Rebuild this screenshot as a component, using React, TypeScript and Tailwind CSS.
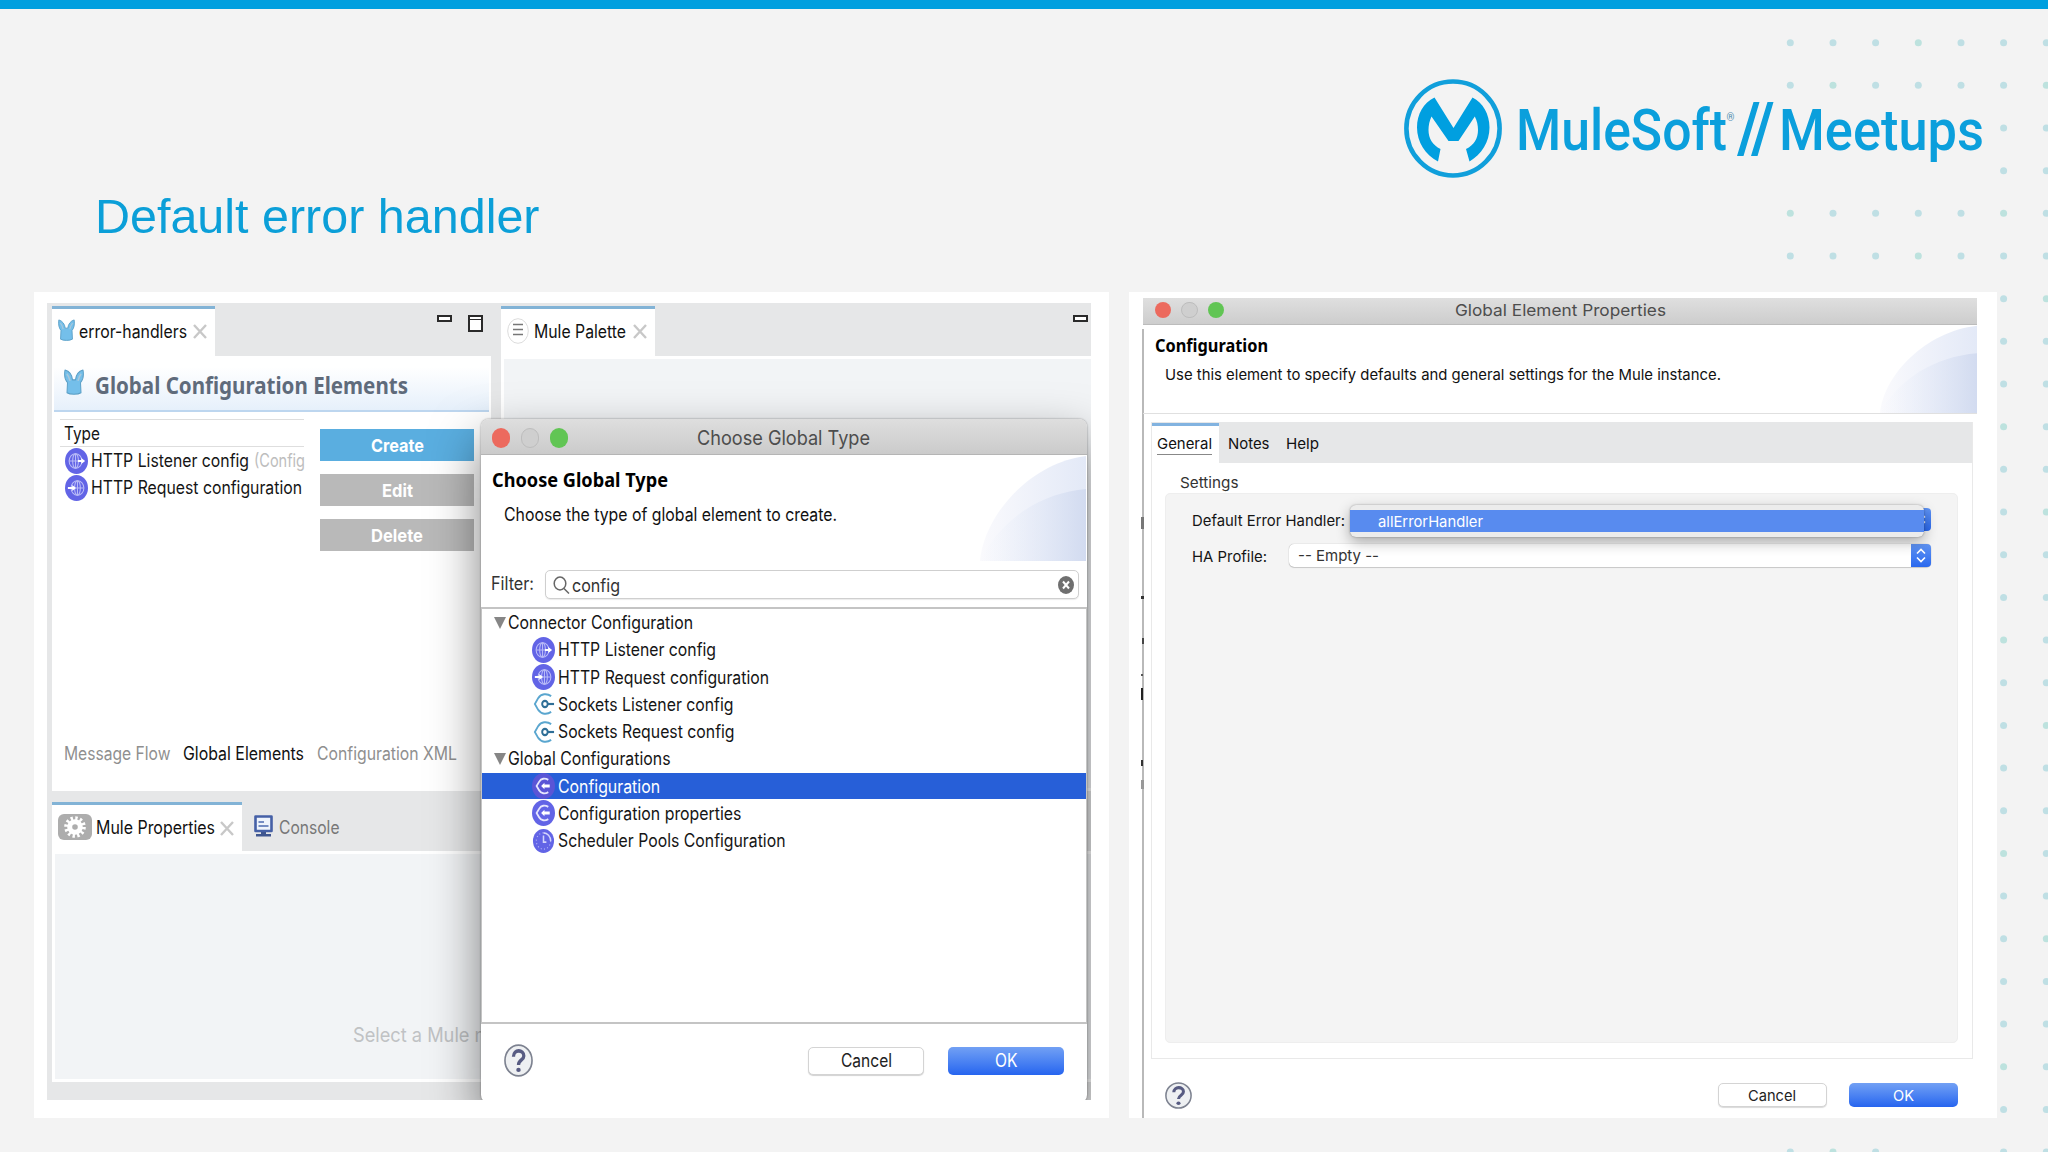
import React, { useLayoutEffect, useRef, useState } from "react";

/* Text set to an exact advance width, condensed or widened horizontally. */
function Fit({ w, className = "", children }: { w: number; className?: string; children: React.ReactNode }) {
  const ref = useRef<HTMLSpanElement>(null);
  const [scale, setScale] = useState(1);
  useLayoutEffect(() => {
    if (ref.current) setScale(w / (ref.current.getBoundingClientRect().width / scale));
  }, [w]);
  return (
    <span className={"block shrink-0 whitespace-nowrap " + className} style={{ width: w }}>
      <span ref={ref} className="inline-block origin-left" style={{ transform: `scaleX(${scale})` }}>
        {children}
      </span>
    </span>
  );
}

const COLS = [1790.3, 1833, 1875.6, 1918.3, 1961, 2003.6, 2046.3];

function Dots() {
  const dots: [number, number][] = [];
  for (let r = 1; r <= 27; r++) {
    COLS.forEach((x, c) => {
      const wide = r === 1 || r === 2 || r === 5 || r === 6 || (r === 27 && c < 3);
      if (wide || c >= 5) dots.push([x, r * 42.67]);
    });
  }
  return (
    <svg className="absolute inset-0" width="2048" height="1152">
      {dots.map(([x, y], i) => (
        <circle key={i} cx={x} cy={y} r="3.5" fill={i % 5 === 3 ? "#bde2de" : "#bfdfe4"} />
      ))}
    </svg>
  );
}

function MuleLogo() {
  return (
    <svg className="h-[99px] w-[98px] shrink-0" viewBox="0 0 98 99">
      <ellipse cx="49" cy="49.5" rx="46.6" ry="47" fill="none" stroke="#109fdb" strokeWidth="4.6" />
      <path
        fill="#009fe0"
        d="M30.5 18.5 L49.5 49 L68.5 18.5 C79 24 85.500 35 85.500 48.500 C85.500 63 77.500 75.500 65.500 82.500 L62 70 C70 66 74 59.500 74 51 C74 46 73 42 70.800 37.500 L54.500 62 L44.500 62 L27.500 37.500 C25.500 42 24.500 46 24.500 51 C24.500 59.500 28.500 66 36.500 70 L34 82.500 C21.500 76 13 63 13 48.500 C13 35 19.500 24 30.500 18.500 Z"
      />
    </svg>
  );
}

function Mule({ className }: { className: string }) {
  return (
    <svg className={className} viewBox="0 0 20 24" preserveAspectRatio="none">
      <path
        fill="#74bfea"
        stroke="#5a9fc6"
        strokeWidth="1"
        strokeLinejoin="round"
        d="M1 1 C5 2 8 5.500 8.500 10 L11.500 10 C12 5.500 15 2 19 1 C20 6 18.500 10.500 16.500 12.500 L17 22 C14 23.800 6 23.800 3 22 L3.500 12.500 C1.500 10.500 0 6 1 1 Z"
      />
      <path d="M2.800 4.500 C4.800 6.500 5.500 8.500 6 11 M17.200 4.500 C15.200 6.500 14.500 8.500 14 11" fill="none" stroke="#a9c9dc" strokeWidth="1.500" />
    </svg>
  );
}

type IconKind = "listener" | "request" | "socket" | "config" | "clock";

function TypeIcon({ kind, dim = false }: { kind: IconKind; dim?: boolean }) {
  if (kind === "socket")
    return (
      <svg className="h-[26px] w-[23px] shrink-0" viewBox="0 0 24 24" preserveAspectRatio="none" fill="none">
        <path d="M20 4.800 C15.500 1.800 9.500 2.600 6.500 6.500 L3 12 L6.500 17.500 C9.500 21.400 15.500 22.200 20 19.200" stroke="#5aa6cf" strokeWidth="1.900" />
        <circle cx="13.500" cy="12" r="2.900" stroke="#2f6f97" strokeWidth="2" />
        <path d="M16.500 12 H23" stroke="#2f6f97" strokeWidth="2" />
      </svg>
    );
  return (
    <svg className="h-[26px] w-[23px] shrink-0" viewBox="0 0 24 24" preserveAspectRatio="none" fill="none">
      <circle cx="12" cy="12" r={kind === "clock" ? 11 : 12} fill={dim ? "#5a55d6" : "#6264e6"} />
      {(kind === "listener" || kind === "request") && (
        <g stroke="#b9bbf7" strokeWidth="1.100" transform={kind === "request" ? "translate(1.500 0)" : "translate(-0.500 0)"}>
          <circle cx="11.500" cy="12" r="6.700" />
          <ellipse cx="11.500" cy="12" rx="3" ry="6.700" />
          <path d="M4.800 12 H18 M11.500 5.300 V18.700" />
        </g>
      )}
      {kind === "listener" && <path d="M13.500 11 H17 V9.200 L21 12 L17 14.800 V13 H13.500 Z" fill="#fff" />}
      {kind === "request" && <path d="M3 11 H7.500 V9.200 L11.500 12 L7.500 14.800 V13 H3 Z" fill="#fff" />}
      {kind === "config" && (
        <g>
          <path d="M17 6.400 C13.500 4.300 9.500 5 7.500 8 L4.800 12 L7.500 16 C9.500 19 13.500 19.700 17 17.600" stroke="#e6e6fd" strokeWidth="1.800" />
          <path d="M9.500 12 L13 9 V10.600 H18.500 V13.400 H13 V15 Z" fill="#fff" />
        </g>
      )}
      {kind === "clock" && (
        <g stroke="#d4d5fb">
          <path d="M12 4.500 A7.500 7.500 0 0 1 19.500 12" strokeWidth="1.600" />
          <path d="M19.500 12 A7.500 7.500 0 1 1 12 4.500" strokeWidth="1.200" strokeDasharray="1 2.400" opacity="0.700" />
          <path d="M12 7 V13 H15" strokeWidth="1.600" />
        </g>
      )}
    </svg>
  );
}

function Close() {
  return (
    <svg className="h-[15px] w-[14px] shrink-0" viewBox="0 0 14 15" preserveAspectRatio="none">
      <path d="M1 1 L13 14 M13 1 L1 14" stroke="#c8c8c8" strokeWidth="2.400" />
    </svg>
  );
}

function Minimize() {
  return <span className="block h-[7px] w-[15px] shrink-0 border-2 border-[#2a2a2a] bg-white" />;
}

function Lights({ className }: { className: string }) {
  return (
    <>
      <span className={"rounded-full bg-[#ec6a5e] " + className} />
      <span className={"rounded-full border border-[#bdbdbd] bg-[#cfcfcf] " + className} />
      <span className={"rounded-full bg-[#61c554] " + className} />
    </>
  );
}

function Swoosh({ id, className }: { id: string; className: string }) {
  return (
    <svg className={className} viewBox="0 0 106 106" preserveAspectRatio="none">
      <defs>
        <linearGradient id={id + "a"} x1="0" x2="1">
          <stop offset="0" stopColor="#fafafd" />
          <stop offset="1" stopColor="#e3e9f7" />
        </linearGradient>
        <linearGradient id={id + "b"} x1="0" x2="1">
          <stop offset="0" stopColor="#eef2fb" stopOpacity="0" />
          <stop offset="1" stopColor="#d2dbf0" />
        </linearGradient>
      </defs>
      <path d="M0 106 C4 60 50 8 106 1 V106 Z" fill={`url(#${id}a)`} />
      <path d="M0 106 C20 65 60 38 106 34 V106 Z" fill={`url(#${id}b)`} />
    </svg>
  );
}

function HelpIcon({ className }: { className: string }) {
  return (
    <svg className={className} viewBox="0 0 30 30" preserveAspectRatio="none">
      <circle cx="15" cy="15" r="14" fill="#eef0f2" stroke="#7d8290" strokeWidth="1.700" />
      <path d="M9.800 11.500 C9.800 4.500 20.500 4.800 20.500 10.800 C20.500 14.800 15 14.500 15 19" fill="none" stroke="#575b82" strokeWidth="3.400" />
      <ellipse cx="15" cy="23.600" rx="2.300" ry="1.900" fill="#575b82" />
    </svg>
  );
}

const TREE: { label: string; w: number; icon?: IconKind; selected?: boolean }[] = [
  { label: "Connector Configuration", w: 185 },
  { label: "HTTP Listener config", w: 158, icon: "listener" },
  { label: "HTTP Request configuration", w: 211, icon: "request" },
  { label: "Sockets Listener config", w: 175.5, icon: "socket" },
  { label: "Sockets Request config", w: 176.5, icon: "socket" },
  { label: "Global Configurations", w: 162.5 },
  { label: "Configuration", w: 102, icon: "config", selected: true },
  { label: "Configuration properties", w: 183.5, icon: "config" },
  { label: "Scheduler Pools Configuration", w: 227.5, icon: "clock" },
];

function ChooseDialog() {
  return (
    <div className="absolute left-[434px] top-[116px] flex h-[684px] w-[606px] flex-col rounded-[8px] bg-white shadow-[0_22px_50px_rgba(0,0,0,0.5),0_0_2px_rgba(0,0,0,0.45)]">
      <div className="relative flex h-[36px] shrink-0 items-center gap-[11px] rounded-t-[8px] border-b border-[#b5b5b5] bg-gradient-to-b from-[#dedede] to-[#cbcbcb] pl-[11px] pt-[2px]">
        <Lights className="h-[20px] w-[18px]" />
        <Fit w={173} className="ml-[118px] text-[20px] leading-[34px] text-[#4d4d4d]">Choose Global Type</Fit>
      </div>
      <div className="flex h-[106px] shrink-0 justify-between">
        <div className="pl-[11px] pt-[13px]">
          <Fit w={176} className="font-['Noto_Sans'] text-[19.5px] font-bold leading-[24px] text-black">Choose Global Type</Fit>
          <Fit w={333} className="ml-[12px] mt-[11px] text-[18px] leading-[24px] text-[#111]">Choose the type of global element to create.</Fit>
        </div>
        <Swoosh id="left" className="mr-px h-[106px] w-[106px]" />
      </div>
      <div className="flex h-[46px] shrink-0 items-center pl-[10px]">
        <Fit w={43} className="text-[18px] leading-[28px] text-[#333]">Filter:</Fit>
        <div className="ml-[11px] mt-px flex h-[29px] w-[534px] items-center rounded-[5px] border border-[#cfcfcf] bg-white pl-[7px] pr-[4px] shadow-[0_1px_1px_rgba(0,0,0,0.08)]">
          <svg className="h-[18px] w-[17px]" viewBox="0 0 17 18" fill="none" stroke="#666" strokeWidth="1.500">
            <ellipse cx="7" cy="7.500" rx="5.800" ry="6.500" />
            <path d="M11 12.500 L16 17.500" />
          </svg>
          <Fit w={48} className="ml-[2px] mt-[2px] text-[18px] leading-[26px] text-[#333]">config</Fit>
          <svg className="ml-auto h-[18px] w-[16px]" viewBox="0 0 16 18">
            <ellipse cx="8" cy="9" rx="8" ry="9" fill="#6f6f6f" />
            <path d="M5 5.500 L11 12.500 M11 5.500 L5 12.500" stroke="#fff" strokeWidth="2" />
          </svg>
        </div>
      </div>
      <div className="h-[417px] shrink-0 border border-t-2 border-b-2 border-[#c4c4c4]">
        {TREE.map((row) => (
          <div key={row.label} className="flex h-[27.25px] items-center">
            <div className={"flex h-[25.5px] w-full items-center text-[18px] leading-[25px] " + (row.selected ? "bg-[#275fd8] text-white" : "text-[#151515]")}>
              {row.icon ? (
                <span className="flex items-center pl-[50px]">
                  <TypeIcon kind={row.icon} dim={row.selected} />
                  <Fit w={row.w} className="ml-[3px]">{row.label}</Fit>
                </span>
              ) : (
                <span className="flex items-center pl-[12px]">
                  <svg className="h-[12px] w-[12px]" viewBox="0 0 12 12"><path d="M0 0 H12 L6 12 Z" fill="#868686" /></svg>
                  <Fit w={row.w} className="ml-[2px]">{row.label}</Fit>
                </span>
              )}
            </div>
          </div>
        ))}
      </div>
      <div className="flex h-[73px] items-center pl-[23px] text-[18px] leading-[26px]">
        <HelpIcon className="h-[33px] w-[29px]" />
        <div className="ml-[275px] flex h-[28px] w-[116px] items-center justify-center rounded-[5px] border border-[#d4d4d4] bg-white shadow-[0_1px_1px_rgba(0,0,0,0.18)]">
          <Fit w={51} className="text-[#222]">Cancel</Fit>
        </div>
        <div className="ml-[24px] flex h-[28px] w-[116px] items-center justify-center rounded-[5px] bg-gradient-to-b from-[#72a0f4] to-[#2664ef]">
          <Fit w={22.5} className="text-white">OK</Fit>
        </div>
      </div>
    </div>
  );
}

function EditorPane() {
  return (
    <div className="flex w-[439px] shrink-0 flex-col">
      <div className="flex h-[53px] pt-[3px]">
        <div className="flex w-[163px] items-center border-t-[3px] border-[#82b3d6] bg-white pb-[2px] pl-[6px]">
          <Mule className="mb-[4px] h-[22px] w-[17px]" />
          <Fit w={108} className="ml-[4px] text-[18px] leading-[24px] text-[#111]">error-handlers</Fit>
          <span className="ml-[6px]"><Close /></span>
        </div>
        <div className="ml-auto flex gap-[16px] pr-[8px] pt-[9px]">
          <Minimize />
          <span className="block h-[17px] w-[15px] border-2 border-[#2a2a2a] bg-white"><span className="block h-[3px] border-b border-[#2a2a2a]" /></span>
        </div>
      </div>
      <div className="flex h-[435px] flex-col bg-white">
        <div className="mx-[2px] flex h-[56px] items-center border-b-2 border-[#bdd6ef] bg-gradient-to-b from-white from-20% to-[#e6f0fb] pl-[10px]">
          <Mule className="mb-[2px] h-[26px] w-[20px]" />
          <Fit w={313} className="ml-[11px] mt-[4px] font-['Noto_Sans'] text-[23.5px] font-bold leading-[30px] text-[#5f6b7b]">Global Configuration Elements</Fit>
        </div>
        <div className="flex h-[318px] gap-[16px] pl-[8px] pt-[7px]">
          <div className="w-[244px] text-[18px] leading-[27px] text-[#151515]">
            <div className="h-[28px] border-y border-[#dedede] pl-[4px]"><Fit w={36}>Type</Fit></div>
            <div className="flex h-[27px] items-center pl-[5px]">
              <TypeIcon kind="listener" />
              <Fit w={158} className="ml-[2.5px]">HTTP Listener config</Fit>
              <Fit w={51} className="ml-[5px] text-[#bdbdbd]">(Config</Fit>
            </div>
            <div className="flex h-[27px] items-center pl-[5px]">
              <TypeIcon kind="request" />
              <Fit w={211} className="ml-[2.5px]">HTTP Request configuration</Fit>
            </div>
          </div>
          <div className="flex w-[154px] flex-col gap-[13px] pt-[10px] text-[18px] font-bold leading-[33px] text-white">
            <div className="flex h-[32px] justify-center bg-[#5aaee0]"><Fit w={53}>Create</Fit></div>
            <div className="flex h-[32px] justify-center bg-[#b9b9b9]"><Fit w={31}>Edit</Fit></div>
            <div className="flex h-[32px] justify-center bg-[#b9b9b9]"><Fit w={52}>Delete</Fit></div>
          </div>
        </div>
        <div className="mt-[12px] flex pl-[11.5px] text-[18px] leading-[24px] text-[#8f8f8f]">
          <Fit w={106.5}>Message Flow</Fit>
          <Fit w={121} className="ml-[13px] text-[#111]">Global Elements</Fit>
          <Fit w={140} className="ml-[13px]">Configuration XML</Fit>
        </div>
      </div>
    </div>
  );
}

function PalettePane() {
  return (
    <div className="flex w-[591px] shrink-0 flex-col">
      <div className="flex h-[53px] pt-[3px]">
        <div className="flex w-[154px] items-center border-t-[3px] border-[#82b3d6] bg-white pb-[2px] pl-[6px]">
          <svg className="mb-[2px] h-[26px] w-[22px]" viewBox="0 0 22 26">
            <ellipse cx="11" cy="13" rx="10.300" ry="12.300" fill="#fff" stroke="#dcdcdc" />
            <path d="M6 6.500 H16 M6 11.500 H16 M6 16.500 H16" stroke="#777" strokeWidth="1.700" />
          </svg>
          <Fit w={92} className="ml-[5px] text-[18px] leading-[24px] text-[#111]">Mule Palette</Fit>
          <span className="ml-[7px]"><Close /></span>
        </div>
        <div className="ml-auto pr-[4px] pt-[9px]"><Minimize /></div>
      </div>
      <div className="h-[435px] border-[3px] border-r-0 border-white bg-[#f2f4f6]" />
    </div>
  );
}

function PropertiesPane() {
  return (
    <div className="mt-[11px] flex h-[280px] flex-col pl-[5px]">
      <div className="flex h-[49px] text-[18px] leading-[24px]">
        <div className="flex w-[190px] items-center border-t-[3px] border-[#82b3d6] bg-white pl-[6px]">
          <svg className="mb-[3px] h-[26px] w-[34px]" viewBox="0 0 34 26">
            <rect width="34" height="26" rx="6" fill="#adadad" />
            <circle cx="17" cy="13" r="8.800" fill="none" stroke="#fff" strokeWidth="4" strokeDasharray="2.300 2.308" />
            <circle cx="17" cy="13" r="5.300" fill="none" stroke="#fff" strokeWidth="5" />
          </svg>
          <Fit w={119} className="ml-[4px] text-[#111]">Mule Properties</Fit>
          <span className="ml-[5px]"><Close /></span>
        </div>
        <div className="flex items-center pl-[12px] pt-[3px]">
          <svg className="mb-[5px] h-[22px] w-[19px]" viewBox="0 0 19 22">
            <path d="M1.500 1.500 H17.500 V16 H1.500 Z" fill="#eef4fc" stroke="#4560a6" strokeWidth="2.600" strokeLinejoin="round" />
            <path d="M4.500 7 H10 M4.500 11 H14.500" stroke="#4d6bb0" strokeWidth="1.500" />
            <path d="M7 17 H12 V19 H17 V21.500 H2 V19 H7 Z" fill="#3f568f" />
          </svg>
          <Fit w={60.5} className="ml-[6px] text-[#777]">Console</Fit>
        </div>
      </div>
      <div className="h-[231px] border-[3px] border-r-0 border-white bg-[#f2f4f6] pl-[298px] pt-[168px]">
        <Fit w={165} className="text-[20px] leading-[26px] text-[#c0c2c4]">Select a Mule node</Fit>
      </div>
    </div>
  );
}

function Chevrons() {
  return (
    <span className="flex h-full w-[20px] items-center justify-center rounded-r-[4px] bg-gradient-to-b from-[#6094f4] to-[#2a68ee]">
      <svg className="h-[15px] w-[10px]" viewBox="0 0 10 15" fill="none" stroke="#fff" strokeWidth="1.600">
        <path d="M1 5.500 L5 1.500 L9 5.500 M1 9.500 L5 13.500 L9 9.500" />
      </svg>
    </span>
  );
}

function PropertiesDialog() {
  return (
    <section className="relative ml-[20px] flex h-[826px] w-[868px] flex-col bg-white pl-[14px] pr-[20px] pt-[6px]">
      <span className="absolute bottom-0 left-[13px] top-[37px] w-[2px] bg-[#b9b9b9]" />
      <span className="absolute left-[12px] top-[225px] h-[12px] w-[3px] bg-[#777]" />
      <span className="absolute left-[12px] top-[304px] h-[3px] w-[3px] bg-[#333]" />
      <span className="absolute left-[13px] top-[346px] h-[6px] w-[2px] bg-[#444]" />
      <span className="absolute left-[12px] top-[382px] h-[2px] w-[2px] bg-[#555]" />
      <span className="absolute left-[12px] top-[396px] h-[12px] w-[2px] bg-[#222]" />
      <span className="absolute left-[12px] top-[468px] h-[6px] w-[2px] bg-[#333]" />
      <span className="absolute left-[12px] top-[488px] h-[9px] w-[3px] bg-[#999]" />
      <div className="relative flex h-[27px] w-[834px] shrink-0 items-center gap-[10px] border-b border-[#bcbcbc] bg-gradient-to-b from-[#dfdfdf] to-[#cdcdcd] pl-[11.5px]">
        <Lights className="h-[16.5px] w-[16.5px] -mt-[2px]" />
        <Fit w={211} className="ml-[221px] -mt-[3px] text-[16.5px] leading-[24px] text-[#4d4d4d]">Global Element Properties</Fit>
      </div>
      <div className="relative flex h-[89px] w-[834px] shrink-0 justify-between border-b border-[#e0e0e0]">
        <div className="pl-[12px] pt-[9px]">
          <Fit w={113} className="font-['Noto_Sans'] text-[17px] font-bold leading-[24px] text-black">Configuration</Fit>
          <Fit w={556} className="ml-[10px] mt-[5px] text-[15px] leading-[24px] text-[#111]">Use this element to specify defaults and general settings for the Mule instance.</Fit>
        </div>
        <Swoosh id="right" className="h-[88px] w-[97px]" />
      </div>
      <div className="ml-[8px] mt-[8px] flex h-[637px] w-[822px] shrink-0 flex-col border border-t-0 border-[#e9e9e9]">
        <div className="flex h-[41px] bg-[#e6e7e8] text-[15px] leading-[20px] text-[#111]">
          <div className="mt-px w-[67px] border-t-[3px] border-[#82b3e0] bg-white pl-[5px] pt-[8px]">
            <Fit w={55} className="border-b border-[#888]">General</Fit>
          </div>
          <Fit w={41.5} className="ml-[9px] mt-[12px]">Notes</Fit>
          <Fit w={33} className="ml-[16px] mt-[12px]">Help</Fit>
        </div>
        <Fit w={58.5} className="ml-[27.5px] mt-[9px] text-[15px] leading-[21px] text-[#333]">Settings</Fit>
        <div className="ml-[13px] flex h-[550px] w-[793px] flex-col rounded-[5px] border border-[#eeeeee] bg-[#f4f4f4] pl-[26px] text-[15px] leading-[24px] text-[#151515]">
          <div className="relative mt-[14px] flex h-[24px] items-center">
            <Fit w={153} className="mt-px">Default Error Handler:</Fit>
            <div className="absolute right-[26px] top-0 h-[23px]"><Chevrons /></div>
            <div className="absolute left-[158px] -top-[3px] z-10 h-[32px] w-[574px] rounded-[6px] bg-[#ececec] py-[5px] shadow-[0_5px_14px_rgba(0,0,0,0.3),0_0_2px_rgba(0,0,0,0.35)]">
              <div className="flex h-[22px] items-center bg-[#588bef] pl-[28px]">
                <Fit w={105} className="mt-px text-white">allErrorHandler</Fit>
              </div>
            </div>
          </div>
          <div className="mt-[11px] flex h-[24px] items-center">
            <Fit w={75} className="mt-[3px]">HA Profile:</Fit>
            <div className="ml-[21.5px] flex h-[23px] w-[642.5px] items-center justify-between rounded-[5px] bg-white pl-[9px] shadow-[0_0_1px_rgba(0,0,0,0.4),0_1px_1px_rgba(0,0,0,0.15)]">
              <Fit w={81} className="mt-px text-[#333]">-- Empty --</Fit>
              <Chevrons />
            </div>
          </div>
        </div>
      </div>
      <div className="flex h-[57px] items-center pl-[22px] pt-[15px] text-[15px] leading-[22px]">
        <HelpIcon className="h-[27px] w-[27px]" />
        <div className="ml-[525.5px] flex h-[24px] w-[109px] items-center justify-center rounded-[5px] border border-[#d4d4d4] bg-white shadow-[0_1px_1px_rgba(0,0,0,0.15)]">
          <Fit w={48} className="mt-px text-[#222]">Cancel</Fit>
        </div>
        <div className="ml-[22px] flex h-[24px] w-[109px] items-center justify-center rounded-[5px] bg-gradient-to-b from-[#72a0f4] to-[#2664ef]">
          <Fit w={21} className="mt-px text-white">OK</Fit>
        </div>
      </div>
    </section>
  );
}

export default function App() {
  return (
    <div className="relative flex h-[1152px] w-[2048px] flex-col overflow-hidden bg-[#f3f3f3] font-['Inter',sans-serif]">
      <Dots />
      <div className="h-[9px] shrink-0 bg-[#009fdf]" />
      <header className="relative flex h-[283px] shrink-0">
        <h1 className="w-[1404px] pl-[95px] pt-[177px] font-['Liberation_Sans',Arial,sans-serif] text-[49px] leading-[60px] text-[#0b9fd8]">
          <Fit w={444.5}>Default error handler</Fit>
        </h1>
        <div className="mt-[70px] flex h-[99px] items-center font-['Roboto',sans-serif] text-[58px] font-medium leading-[70px] text-[#0b9fdc]">
          <MuleLogo />
          <Fit w={211} className="ml-[13.5px] mt-[2px]">MuleSoft</Fit>
          <span className="mb-[22px] w-[7px] text-[10px] leading-[10px] text-[#4f8fb0]">®</span>
          <svg className="ml-[3px] h-[54px] w-[37px]" viewBox="0 0 37 54" fill="#0b9fdc">
            <path d="M0 54 L16.500 0 H22.500 L6.500 54 Z M14 54 L30.500 0 H36.500 L20.500 54 Z" />
          </svg>
          <Fit w={205} className="ml-[5px] mt-[2px]">Meetups</Fit>
        </div>
      </header>
      <main className="relative flex shrink-0 pl-[34px]">
        <section className="h-[826px] w-[1075px] bg-white pl-[13px] pt-[11px]">
          <div className="relative h-[797px] w-[1044px] overflow-hidden bg-[#e6e7e8]">
            <div className="flex h-[488px] gap-[10px] pl-[5px]">
              <EditorPane />
              <PalettePane />
            </div>
            <PropertiesPane />
            <ChooseDialog />
          </div>
        </section>
        <PropertiesDialog />
      </main>
    </div>
  );
}
